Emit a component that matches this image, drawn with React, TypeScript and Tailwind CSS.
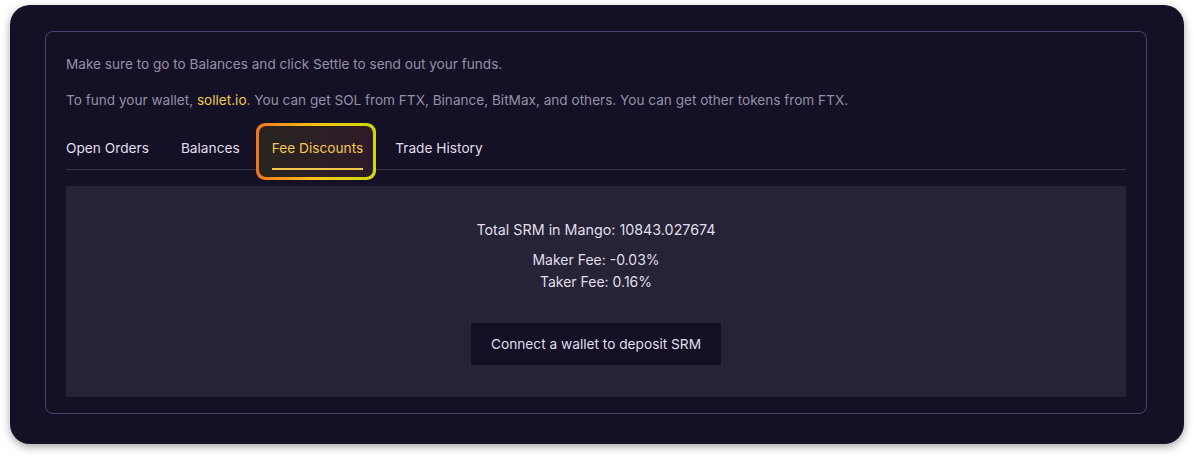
import { useState } from 'react';

const tabs = ['Open Orders', 'Balances', 'Fee Discounts', 'Trade History'];

export default function App() {
  const [active, setActive] = useState('Fee Discounts');

  return (
    <div
      className="min-h-screen bg-white px-[10px] pt-[5px] pb-4"
      style={{ fontFamily: 'Inter, "Noto Sans", sans-serif' }}
    >
      <div className="rounded-[20px] bg-[#141026] pt-[26px] pb-[30px] pl-[35px] pr-[37px] shadow-[0_3px_8px_rgba(0,0,0,0.35)]">
        <div className="rounded-lg border border-[#4c4474] px-5 pt-[22px] pb-4">
          <p className="text-[13.6px] leading-5 text-[#9490a6]">
            Make sure to go to Balances and click Settle to send out your funds.
          </p>
          <p className="mt-4 text-[13.6px] leading-5 text-[#9490a6]">
            To fund your wallet, <span className="text-[#f2c94c]">sollet.io</span>. You can get SOL from FTX, Binance,
            BitMax, and others. You can get other tokens from FTX.
          </p>

          <div className="mt-7 flex gap-8 border-b border-[#37324a]">
            {tabs.map((t) => {
              const isActive = t === active;
              return (
                <button
                  key={t}
                  onClick={() => setActive(t)}
                  className={`relative -mb-px pb-3 text-[13.7px] leading-5 ${
                    isActive ? 'text-[#f2c94c]' : 'text-[#e0deea]'
                  }`}
                >
                  {isActive && (
                    <span className="absolute -left-4 -right-[13px] -top-[15px] -bottom-[10px] rounded-[9px] bg-gradient-to-r from-[#f4731f] via-[#fac415] to-[#c7dd0c] p-[3px]">
                      <span className="block h-full w-full rounded-[7px] bg-gradient-to-r from-[#28241f] to-[#2e1a29]" />
                    </span>
                  )}
                  <span className="relative">{t}</span>
                  {isActive && (
                    <span className="absolute bottom-0 left-0 right-0 h-[2px] bg-[#f2c94c]" />
                  )}
                </button>
              );
            })}
          </div>

          <div className="mt-4 flex flex-col items-center bg-[#262337] pt-[34px] pb-[32px] text-sm leading-5 text-[#e0deea]">
            <p className="text-[14.3px]">Total SRM in Mango: 10843.027674</p>
            <p className="mt-[9px] leading-[22px]">Maker Fee: -0.03%</p>
            <p className="leading-[22px]">Taker Fee: 0.16%</p>
            <button className="mt-[30px] h-[42px] bg-[#141026] px-5 text-[13.7px] text-[#e0deea]">
              Connect a wallet to deposit SRM
            </button>
          </div>
        </div>
      </div>
    </div>
  );
}
